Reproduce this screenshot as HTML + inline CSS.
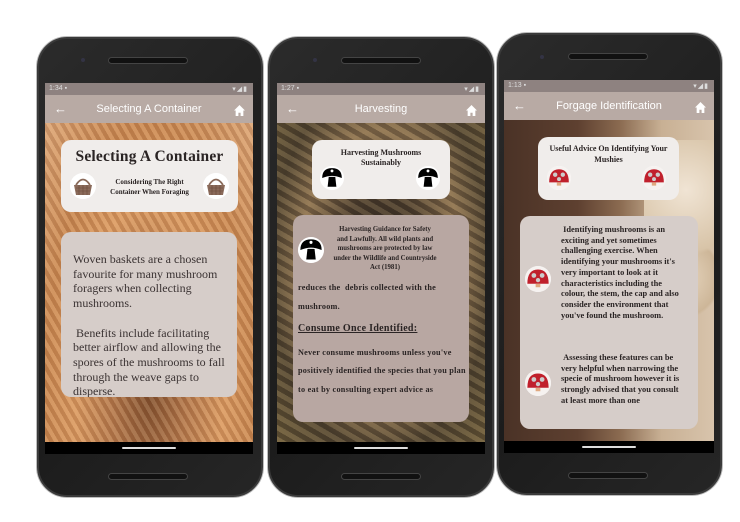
<!DOCTYPE html>
<html><head><style>
*{margin:0;padding:0;box-sizing:border-box}
body{width:740px;height:522px;background:#fff;position:relative;overflow:hidden;font-family:"Liberation Serif",serif}
.ph{position:absolute;background:linear-gradient(135deg,#2b2b2b,#1c1c1c 60%,#262626);border-radius:30px;border:2px solid #3a3a3a;box-shadow:0 0 0 1px #bdbdbd}
.spk{position:absolute;height:7px;border-radius:4px;background:#111;border:1px solid #444}
.cam{position:absolute;width:4px;height:4px;border-radius:50%;background:#334}
.scr{position:absolute;overflow:hidden;background:#000}
.sb{position:absolute;left:0;right:0;top:0;height:12px;background:#8e8280;color:#ddd;font:7px "Liberation Sans",sans-serif;padding:2px 4px}
.sb b{position:absolute;right:5px;top:2px;font-weight:normal;letter-spacing:1px}
.ab{position:absolute;left:0;right:0;top:12px;height:28px;background:#b8aaa4;color:#fff;font:11px "Liberation Sans",sans-serif;text-align:center;line-height:28px}
.ab .l{position:absolute;left:9px;top:0;font-size:13px;font-weight:bold}
.ab .r{position:absolute;right:8px;top:4px}
.ct{position:absolute;left:0;right:0;top:40px;bottom:12px}
.nv{position:absolute;left:0;right:0;bottom:0;height:12px;background:#000}
.nv i{position:absolute;left:50%;top:5px;width:54px;margin-left:-27px;height:2px;background:#ddd;border-radius:1px}
.card{position:absolute;border-radius:10px;color:#2a2424;font-weight:bold}
.t{background:#f0edeb}
.b1{background:#d6cdc9}
.b2{background:#b8a7a2}
.ic{position:absolute;width:22px;height:22px;border-radius:50%;background:#fff}
</style></head><body>

<!-- phone 1 -->
<div class="ph" style="left:37px;top:37px;width:226px;height:460px"></div>
<div class="spk" style="left:108px;top:57px;width:80px"></div><div class="cam" style="left:81px;top:58px"></div>
<div class="spk" style="left:108px;top:473px;width:80px"></div>
<div class="scr" style="left:45px;top:83px;width:208px;height:371px">
 <div class="sb">1:34 ▪<b>▾◢▮</b></div>
 <div class="ab"><span class="l">←</span>Selecting A Container<span class="r"><svg width="11" height="11" viewBox="0 0 10 10"><path d="M5 0L0 5h1.5v5h2.5V7h2v3h2.5V5H10z" fill="#fff"/></svg></span></div>
 <div class="ct" style="background:radial-gradient(ellipse at 50% 85%,#7a4a2a 0,#b07448 25%,#d9985f 50%,#c8864f 70%,#dba577 100%)">
  <div style="position:absolute;left:0;top:0;right:0;bottom:0;background:repeating-linear-gradient(60deg,rgba(255,220,180,.18) 0 4px,rgba(120,70,40,.18) 4px 8px)"></div>
 </div>
 <div class="card t" style="left:16px;top:57px;width:177px;height:72px">
  <div style="text-align:center;font-size:15.5px;margin-top:8px;letter-spacing:.2px">Selecting A Container</div>
  <div style="position:absolute;left:38px;right:38px;top:37px;text-align:center;font-size:7px;line-height:10px">Considering The Right<br>Container When Foraging</div>
  <svg class="ic" style="left:9px;top:33px;width:26px;height:26px" viewBox="0 0 26 26"><circle cx="13" cy="13" r="13" fill="#fff"/><path d="M6 12 Q13 1 20 12" fill="none" stroke="#8a6a5a" stroke-width="1.8"/><path d="M4 12h18l-2 10H6z" fill="#8a6a5a"/><path d="M6 15h14M6 18h14M9 12v10M13 12v10M17 12v10" stroke="#6a4a3a" stroke-width=".6"/></svg>
  <svg class="ic" style="left:142px;top:33px;width:26px;height:26px" viewBox="0 0 26 26"><circle cx="13" cy="13" r="13" fill="#fff"/><path d="M6 12 Q13 1 20 12" fill="none" stroke="#8a6a5a" stroke-width="1.8"/><path d="M4 12h18l-2 10H6z" fill="#8a6a5a"/><path d="M6 15h14M6 18h14M9 12v10M13 12v10M17 12v10" stroke="#6a4a3a" stroke-width=".6"/></svg>
 </div>
 <div class="card b1" style="left:16px;top:149px;width:176px;height:165px;font-weight:normal;font-size:12px;line-height:14.7px;padding:20px 8px 0 12px;color:#3a3232;overflow:hidden">Woven baskets are a chosen favourite for many mushroom foragers when collecting mushrooms.<br><br>&nbsp;Benefits include facilitating better airflow and allowing the spores of the mushrooms to fall through the weave gaps to disperse.</div>
 <div class="nv"><i></i></div>
</div>

<!-- phone 2 -->
<div class="ph" style="left:268px;top:37px;width:226px;height:460px"></div>
<div class="spk" style="left:341px;top:57px;width:80px"></div><div class="cam" style="left:313px;top:58px"></div>
<div class="spk" style="left:341px;top:473px;width:80px"></div>
<div class="scr" style="left:277px;top:83px;width:208px;height:371px">
 <div class="sb">1:27 ▪<b>▾◢▮</b></div>
 <div class="ab"><span class="l">←</span>Harvesting<span class="r"><svg width="11" height="11" viewBox="0 0 10 10"><path d="M5 0L0 5h1.5v5h2.5V7h2v3h2.5V5H10z" fill="#fff"/></svg></span></div>
 <div class="ct" style="background:radial-gradient(ellipse at 50% 45%,#2e2620 0,#4a3c2e 30%,#8a7050 55%,#4e4230 75%,#6a5a3a 100%)">
  <div style="position:absolute;left:0;top:0;right:0;bottom:0;background:repeating-linear-gradient(30deg,rgba(230,200,140,.15) 0 5px,rgba(40,30,20,.25) 5px 10px)"></div>
 </div>
 <div class="card t" style="left:35px;top:57px;width:138px;height:59px">
  <div style="text-align:center;font-size:8px;line-height:10px;margin-top:8px">Harvesting Mushrooms<br>Sustainably</div>
  <svg class="ic" style="left:8px;top:26px;width:24px;height:24px" viewBox="0 0 22 22"><circle cx="11" cy="11" r="11" fill="#fff"/><path d="M2 11Q2 2 11 2Q20 2 20 11Q15 9 11 9Q7 9 2 11z" fill="#000"/><circle cx="11" cy="4.5" r="1.3" fill="#fff"/><path d="M8 10h6l1 9H7z" fill="#000"/></svg>
  <svg class="ic" style="left:104px;top:26px;width:24px;height:24px" viewBox="0 0 22 22"><circle cx="11" cy="11" r="11" fill="#fff"/><path d="M2 11Q2 2 11 2Q20 2 20 11Q15 9 11 9Q7 9 2 11z" fill="#000"/><circle cx="11" cy="4.5" r="1.3" fill="#fff"/><path d="M8 10h6l1 9H7z" fill="#000"/></svg>
 </div>
 <div class="card b2" style="left:16px;top:132px;width:176px;height:207px;overflow:hidden">
  <svg class="ic" style="left:5px;top:22px;width:26px;height:26px" viewBox="0 0 22 22"><circle cx="11" cy="11" r="11" fill="#fff"/><path d="M2 11Q2 2 11 2Q20 2 20 11Q15 9 11 9Q7 9 2 11z" fill="#000"/><circle cx="11" cy="4.5" r="1.3" fill="#fff"/><path d="M8 10h6l1 9H7z" fill="#000"/></svg>
  <div style="position:absolute;left:40px;width:104px;top:10px;text-align:center;font-size:6.8px;line-height:9.6px">Harvesting Guidance for Safety and Lawfully.  All wild plants and mushrooms are protected by law under the Wildlife and Countryside Act (1981)</div>
  <div style="position:absolute;left:5px;right:3px;top:64px;font-size:8.2px;line-height:18.5px;letter-spacing:.25px">reduces the&nbsp; debris collected with the mushroom.<div style="font-size:10px;text-decoration:underline;margin:4px 0 5px;letter-spacing:.3px">Consume Once Identified:</div>Never consume mushrooms unless you've positively identified the species that you plan to eat by consulting expert advice as</div>
 </div>
 <div class="nv"><i></i></div>
</div>

<!-- phone 3 -->
<div class="ph" style="left:497px;top:33px;width:225px;height:462px"></div>
<div class="spk" style="left:568px;top:53px;width:80px"></div><div class="cam" style="left:540px;top:55px"></div>
<div class="spk" style="left:568px;top:472px;width:80px"></div>
<div class="scr" style="left:504px;top:80px;width:210px;height:373px">
 <div class="sb">1:13 ▪<b>▾◢▮</b></div>
 <div class="ab"><span class="l">←</span>Forgage Identification<span class="r"><svg width="11" height="11" viewBox="0 0 10 10"><path d="M5 0L0 5h1.5v5h2.5V7h2v3h2.5V5H10z" fill="#fff"/></svg></span></div>
 <div class="ct" style="background:linear-gradient(90deg,#4a3226 0,#5e4030 35%,#8a6a50 55%,#c8b094 75%,#d8c4ac 100%)">
  <div style="position:absolute;right:0;top:20px;width:70px;height:250px;background:radial-gradient(circle at 60% 20%,#f0e4d4 0,#d8c4a8 30%,transparent 32%),radial-gradient(circle at 50% 55%,#eadac4 0,#cdb698 28%,transparent 30%)"></div>
 </div>
 <div class="card t" style="left:34px;top:57px;width:141px;height:63px">
  <div style="text-align:center;font-size:8px;line-height:10.5px;margin-top:7px;padding:0 6px">Useful Advice On Identifying Your Mushies</div>
  <svg class="ic" style="left:9px;top:29px;width:24px;height:24px" viewBox="0 0 22 22"><circle cx="11" cy="11" r="11" fill="#f6f2f0"/><path d="M2 15Q2 3 11 3Q20 3 20 15z" fill="#c0202c"/><circle cx="7.5" cy="8" r="2" fill="#ccc"/><circle cx="14.5" cy="8" r="2" fill="#ccc"/><circle cx="11" cy="12" r="1.8" fill="#ccc"/><path d="M9 15h4v3H9z" fill="#e0a880"/></svg>
  <svg class="ic" style="left:104px;top:29px;width:24px;height:24px" viewBox="0 0 22 22"><circle cx="11" cy="11" r="11" fill="#f6f2f0"/><path d="M2 15Q2 3 11 3Q20 3 20 15z" fill="#c0202c"/><circle cx="7.5" cy="8" r="2" fill="#ccc"/><circle cx="14.5" cy="8" r="2" fill="#ccc"/><circle cx="11" cy="12" r="1.8" fill="#ccc"/><path d="M9 15h4v3H9z" fill="#e0a880"/></svg>
 </div>
 <div class="card b1" style="left:16px;top:136px;width:178px;height:213px;overflow:hidden">
  <svg class="ic" style="left:5px;top:50px;width:26px;height:26px" viewBox="0 0 22 22"><circle cx="11" cy="11" r="11" fill="#f6f2f0"/><path d="M2 15Q2 3 11 3Q20 3 20 15z" fill="#c0202c"/><circle cx="7.5" cy="8" r="2" fill="#ccc"/><circle cx="14.5" cy="8" r="2" fill="#ccc"/><circle cx="11" cy="12" r="1.8" fill="#ccc"/><path d="M9 15h4v3H9z" fill="#e0a880"/></svg>
  <svg class="ic" style="left:5px;top:154px;width:26px;height:26px" viewBox="0 0 22 22"><circle cx="11" cy="11" r="11" fill="#f6f2f0"/><path d="M2 15Q2 3 11 3Q20 3 20 15z" fill="#c0202c"/><circle cx="7.5" cy="8" r="2" fill="#ccc"/><circle cx="14.5" cy="8" r="2" fill="#ccc"/><circle cx="11" cy="12" r="1.8" fill="#ccc"/><path d="M9 15h4v3H9z" fill="#e0a880"/></svg>
  <div style="position:absolute;left:41px;width:118px;top:9px;font-size:8.4px;line-height:10.7px">&nbsp;Identifying mushrooms is an exciting and yet sometimes challenging exercise.   When identifying your mushrooms it's very important to look at it characteristics including the colour, the stem, the cap and also consider the environment that you've found the mushroom.</div>
  <div style="position:absolute;left:41px;width:126px;top:137px;font-size:8.4px;line-height:10.7px">&nbsp;Assessing these features can be very helpful when narrowing the specie of mushroom however it is strongly advised that you consult at least more than one</div>
 </div>
 <div class="nv"><i></i></div>
</div>

</body></html>
